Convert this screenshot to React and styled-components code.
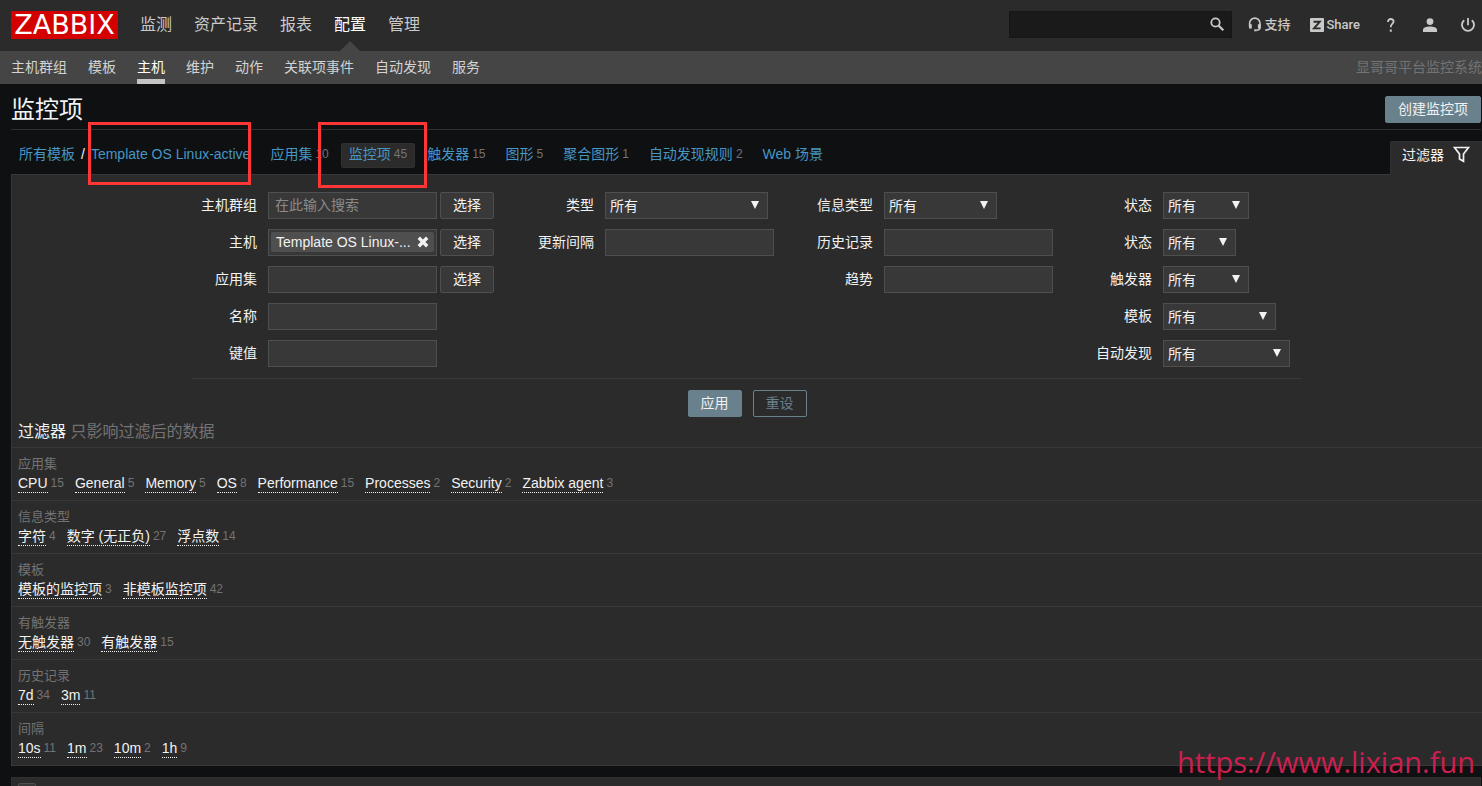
import React from 'react';
import styled, { createGlobalStyle, css } from 'styled-components';

const GlobalStyle = createGlobalStyle`
  * {
    box-sizing: border-box;
  }
  body {
    margin: 0;
    background: #0e1012;
    color: #f2f2f2;
    font-family: "Liberation Sans", "Noto Sans CJK SC", sans-serif;
    font-size: 14px;
    line-height: 20px;
  }
  a {
    text-decoration: none;
  }
  ul {
    list-style: none;
    margin: 0;
    padding: 0;
  }
  button, input, select {
    font: inherit;
    color: inherit;
  }
`;

const Page = styled.div`
  position: relative;
  height: 100vh;
  overflow: hidden;
`;

/* top bar */
const TopBar = styled.header`
  display: flex;
  justify-content: space-between;
  align-items: center;
  height: 51px;
  padding: 0 7px 2px 11px;
  background: #2b2b2b;
`;

const TopLeft = styled.nav`
  display: flex;
  align-items: center;
  gap: 22px;
`;

const Logo = styled.a`
  display: block;
  width: 107px;
  height: 28px;
  background: #d40000;
  color: #fff;
  font-family: "DejaVu Sans", sans-serif;
  font-size: 27px;
  line-height: 28px;
  text-align: center;
`;

const MainMenu = styled.ul`
  display: flex;
  gap: 22px;
`;

const MainLink = styled.a`
  position: relative;
  display: block;
  font-size: 16px;
  line-height: 51px;
  color: ${({ $active }) => ($active ? '#fff' : '#c9c9c9')};
  ${({ $active }) => $active && css`
    &::after {
      content: '';
      position: absolute;
      bottom: -1px;
      left: 50%;
      margin-left: -10px;
      border: 10px solid transparent;
      border-top: 0;
      border-bottom-color: #454545;
    }
  `}
`;

const TopRight = styled.div`
  display: flex;
  align-items: center;
  color: #c9c9c9;
`;

const SearchForm = styled.form`
  display: flex;
  align-items: center;
  width: 223px;
  height: 27px;
  margin-right: 16px;
  background: #1a1a1a;
  border: 1px solid #161616;
`;

const SearchInput = styled.input`
  flex: 1;
  min-width: 0;
  height: 100%;
  padding: 0 6px;
  background: transparent;
  border: 0;
  outline: none;
`;

const IconButton = styled.button`
  display: flex;
  padding: 0 6px;
  background: none;
  border: 0;
  cursor: pointer;
`;

const ToolLink = styled.a`
  display: flex;
  align-items: center;
  gap: 2px;
  margin-right: ${({ $gap }) => $gap || 0}px;
  color: #c9c9c9;
  font-family: Roboto, "Noto Sans CJK SC", sans-serif;
  font-size: 13px;
  font-weight: 500;
`;

/* second level */
const SubBar = styled.nav`
  display: flex;
  justify-content: space-between;
  height: 33px;
  padding-left: 11px;
  background: #454545;
`;

const SubMenu = styled.ul`
  display: flex;
  gap: 21px;
`;

const SubLink = styled.a`
  display: block;
  height: 33px;
  line-height: 32px;
  color: ${({ $active }) => ($active ? '#fff' : '#d3d3d3')};
  border-bottom: ${({ $active }) => ($active ? '5px solid #c4c4c4' : '0')};
`;

const ServerName = styled.span`
  line-height: 32px;
  color: #737373;
  white-space: nowrap;
`;

/* heading */
const Main = styled.main`
  padding-left: 11px;
`;

const TitleRow = styled.div`
  display: flex;
  justify-content: space-between;
  align-items: center;
  height: 46px;
  margin-right: 1px;
  padding-top: 6px;
  border-bottom: 1px solid #303030;
`;

const Title = styled.h1`
  margin: 0;
  font-size: 24px;
  font-weight: 400;
  line-height: 32px;
`;

const Button = styled.button`
  height: 27px;
  padding: 0 12px 2px;
  border: 1px solid ${({ $kind }) => ($kind ? '#69808d' : '#4f4f4f')};
  border-radius: 2px;
  background: ${({ $kind }) =>
    $kind === 'primary' ? '#69808d' : $kind === 'outline' ? 'transparent' : '#383838'};
  color: ${({ $kind }) => ($kind === 'outline' ? '#69808d' : '#f2f2f2')};
  line-height: 22px;
  white-space: nowrap;
  cursor: pointer;
`;

/* template navigation */
const NavRow = styled.div`
  display: flex;
  justify-content: space-between;
  align-items: flex-end;
  height: 44px;
`;

const Crumbs = styled.ul`
  display: flex;
  gap: 4px;
  padding-bottom: 6px;
`;

const Crumb = styled.li`
  position: relative;
  display: flex;
  align-items: center;
  height: 25px;
  padding: 0 7px 4px;
  border: 1px solid ${({ $selected }) => ($selected ? '#303030' : 'transparent')};
  border-radius: 2px;
  background: ${({ $selected }) => ($selected ? '#2b2b2b' : 'transparent')};
  white-space: nowrap;
  a {
    color: #4796c4;
  }
`;

const CrumbPath = styled.div`
  display: flex;
  gap: 6px;
`;

const Count = styled.span`
  margin-left: 3px;
  font-size: 12px;
  color: #737373;
`;

const Highlight = styled.span`
  position: absolute;
  z-index: 2;
  border: 3px solid #ff3636;
  pointer-events: none;
  ${({ $wide }) => ($wide
    ? 'top: -22px; left: -24px; right: -13px; bottom: -21px;'
    : 'top: -22px; left: -3px; right: -1px; bottom: -21px;')}
`;

const Anchor = styled.span`
  position: relative;
`;

const FilterTab = styled.a`
  display: flex;
  align-items: center;
  gap: 9px;
  height: 34px;
  margin-bottom: -1px;
  padding: 0 12px 8px 11px;
  border: 1px solid #303030;
  border-width: 1px 0 0 1px;
  border-radius: 2px 0 0 0;
  background: #2b2b2b;
  color: #f2f2f2;
`;

const Panel = styled.section`
  border: 1px solid #383838;
  border-right: 0;
  background: #2b2b2b;
`;

/* filter form */
const FilterForm = styled.form`
  max-width: 1110px;
  margin: 0 auto;
  padding-top: 17px;
`;

const FilterGrid = styled.div`
  display: grid;
  grid-template-columns: 337fr 279fr 279fr 215fr;
  padding-bottom: 11px;
  border-bottom: 1px solid #383838;
`;

const FilterColumn = styled.div`
  display: flex;
  flex-direction: column;
  gap: 10px;
`;

const Field = styled.div`
  display: grid;
  grid-template-columns: 65px auto;
  column-gap: 11px;
  height: 27px;
`;

const Label = styled.label`
  line-height: 27px;
  text-align: right;
  white-space: nowrap;
`;

const Controls = styled.div`
  display: flex;
  gap: 3px;
`;

const boxed = css`
  height: 27px;
  background: #383838;
  border: 1px solid #4f4f4f;
  border-radius: 0;
  outline: none;
`;

const TextInput = styled.input`
  ${boxed}
  width: 169px;
  padding: 0 6px 2px;
  &::placeholder {
    color: #8a8a8a;
  }
`;

const MultiSelect = styled.div`
  ${boxed}
  display: flex;
  width: 169px;
  padding: 2px;
`;

const Chip = styled.span`
  display: flex;
  align-items: center;
  justify-content: space-between;
  flex: 1;
  height: 20px;
  padding: 0 5px 1px;
  border-radius: 2px;
  background: #4f4f4f;
  line-height: 18px;
`;

const ChipRemove = styled.button`
  display: flex;
  padding: 0;
  border: 0;
  background: none;
  cursor: pointer;
`;

const SelectBox = styled.span`
  position: relative;
  &::after {
    content: '';
    position: absolute;
    top: 9px;
    right: 9px;
    width: 8px;
    height: 8px;
    background: #f2f2f2;
    clip-path: polygon(0 0, 100% 0, 50% 100%);
    pointer-events: none;
  }
`;

const Select = styled.select`
  ${boxed}
  appearance: none;
  width: ${({ $width }) => $width}px;
  padding: 0 20px 0 4px;
`;

const FilterActions = styled.div`
  display: flex;
  justify-content: center;
  gap: 11px;
  padding: 11px 0 4px;
`;

/* subfilter */
const SubfilterTitle = styled.h4`
  margin: 0;
  padding: 0 6px 4px;
  font-size: 16px;
  font-weight: 400;
  line-height: 22px;
  span {
    color: #737373;
  }
`;

const Subfilter = styled.div`
  height: 53px;
  padding: 6px 6px 0;
  border-top: 1px solid #383838;
`;

const SubfilterName = styled.h3`
  margin: 0;
  font-size: 13px;
  font-weight: 400;
  line-height: 20px;
  color: #737373;
`;

const SubfilterOptions = styled.ul`
  display: flex;
  gap: 11px;
`;

const Option = styled.li`
  display: flex;
  line-height: 18px;
  a {
    height: 19px;
    color: #f2f2f2;
    border-bottom: 1px dotted #f2f2f2;
  }
`;

const ItemsTable = styled.table`
  width: calc(100% - 1px);
  margin-top: 11px;
  border: 1px solid #303030;
  border-collapse: collapse;
  background: #2b2b2b;
  th {
    padding: 5px 6px;
    text-align: left;
  }
`;

const CheckBox = styled.input`
  appearance: none;
  display: block;
  width: 18px;
  height: 18px;
  margin: 0;
  background: #383838;
  border: 1px solid #4f4f4f;
  border-radius: 2px;
`;

const SiteMark = styled.span`
  position: absolute;
  right: 7px;
  bottom: 6px;
  z-index: 3;
  font-family: "Open Sans", sans-serif;
  font-size: 29px;
  line-height: 36px;
  color: #cc1f50;
  pointer-events: none;
`;

const SearchIcon = () => (
  <svg width="15" height="15" viewBox="0 0 15 15" fill="none" stroke="#c9c9c9">
    <circle cx="5.5" cy="5.5" r="4.2" strokeWidth="1.8" />
    <path d="M8.7 8.7 13.3 13.3" strokeWidth="2.2" />
  </svg>
);

const SupportIcon = () => (
  <svg width="14" height="15" viewBox="0 0 14 15" fill="none" stroke="#c9c9c9" strokeWidth="1.6">
    <path d="M1.6 9.5V6.3a5.2 5.2 0 0 1 10.4 0V10c0 2.2-1.4 3.3-3.6 3.3" />
    <path d="M2.4 7.2v4.2M11.3 7.2v4.2" strokeWidth="2.8" />
    <path d="M6.2 13.3h2.4" strokeWidth="2" />
  </svg>
);

const ShareIcon = () => (
  <svg width="14" height="14" viewBox="0 0 14 14">
    <rect width="14" height="14" rx="1" fill="#c9c9c9" />
    <path d="M3.5 3.8h6.3L4 10.4h6.6" fill="none" stroke="#2b2b2b" strokeWidth="1.9" />
  </svg>
);

const HelpIcon = () => (
  <svg width="8" height="14" viewBox="0 0 8 14" fill="none" stroke="#c9c9c9" strokeWidth="1.8">
    <path d="M1 4V3.6C1 1.9 2.2 1 3.8 1s2.8.9 2.8 2.5c0 2.3-2.8 2.6-2.8 5.2v.6" />
    <path d="M2.8 12.6h2" strokeWidth="2.2" />
  </svg>
);

const UserIcon = () => (
  <svg width="14" height="14" viewBox="0 0 14 14" fill="#c9c9c9">
    <circle cx="7" cy="3.6" r="3.4" />
    <path d="M0 14v-2.2C0 9.8 3.6 8.6 7 8.6s7 1.2 7 3.2V14z" />
  </svg>
);

const PowerIcon = () => (
  <svg width="14" height="14" viewBox="0 0 14 14" fill="none" stroke="#c9c9c9" strokeWidth="1.8">
    <path d="M7 0v7.2" />
    <path d="M3.2 2.2a6 6 0 1 0 7.6 0" />
  </svg>
);

const FunnelIcon = () => (
  <svg width="17" height="17" viewBox="0 0 17 17" fill="none" stroke="#f2f2f2" strokeWidth="1.7">
    <path d="M1.5 1.5h14L10.5 8v7.3L6.5 13V8z" />
  </svg>
);

const CrossIcon = () => (
  <svg width="12" height="12" viewBox="0 0 12 12" stroke="#f2f2f2" strokeWidth="3.4">
    <path d="M1.8 1.8 10.2 10.2M10.2 1.8 1.8 10.2" />
  </svg>
);

const mainMenu = ['监测', '资产记录', '报表', '配置', '管理'];
const subMenu = ['主机群组', '模板', '主机', '维护', '动作', '关联项事件', '自动发现', '服务'];

const sections = [
  { name: '应用集', count: 10 },
  { name: '监控项', count: 45, selected: true },
  { name: '触发器', count: 15 },
  { name: '图形', count: 5 },
  { name: '聚合图形', count: 1 },
  { name: '自动发现规则', count: 2 },
  { name: 'Web 场景' },
];

const filterColumns = [
  [
    { id: 'groups', label: '主机群组', placeholder: '在此输入搜索', pick: true },
    { id: 'hosts', label: '主机', chip: 'Template OS Linux-...', pick: true },
    { id: 'application', label: '应用集', pick: true },
    { id: 'name', label: '名称' },
    { id: 'key', label: '键值' },
  ],
  [
    { id: 'type', label: '类型', select: 163 },
    { id: 'delay', label: '更新间隔' },
  ],
  [
    { id: 'value_type', label: '信息类型', select: 113 },
    { id: 'history', label: '历史记录' },
    { id: 'trends', label: '趋势' },
  ],
  [
    { id: 'state', label: '状态', select: 86 },
    { id: 'status', label: '状态', select: 73 },
    { id: 'triggers', label: '触发器', select: 86 },
    { id: 'templated', label: '模板', select: 113 },
    { id: 'discovery', label: '自动发现', select: 127 },
  ],
];

const subfilters = [
  {
    name: '应用集',
    options: [['CPU', 15], ['General', 5], ['Memory', 5], ['OS', 8], ['Performance', 15],
      ['Processes', 2], ['Security', 2], ['Zabbix agent', 3]],
  },
  { name: '信息类型', options: [['字符', 4], ['数字 (无正负)', 27], ['浮点数', 14]] },
  { name: '模板', options: [['模板的监控项', 3], ['非模板监控项', 42]] },
  { name: '有触发器', options: [['无触发器', 30], ['有触发器', 15]] },
  { name: '历史记录', options: [['7d', 34], ['3m', 11]] },
  { name: '间隔', options: [['10s', 11], ['1m', 23], ['10m', 2], ['1h', 9]] },
];

const FilterField = ({ field }) => {
  let control = <TextInput id={field.id} type="text" placeholder={field.placeholder} />;

  if (field.select) {
    control = (
      <SelectBox>
        <Select id={field.id} $width={field.select}>
          <option>所有</option>
        </Select>
      </SelectBox>
    );
  } else if (field.chip) {
    control = (
      <MultiSelect>
        <Chip>
          {field.chip}
          <ChipRemove id={field.id} type="button">
            <CrossIcon />
          </ChipRemove>
        </Chip>
      </MultiSelect>
    );
  }

  return (
    <Field>
      <Label htmlFor={field.id}>{field.label}</Label>
      <Controls>
        {control}
        {field.pick && <Button type="button">选择</Button>}
      </Controls>
    </Field>
  );
};

const Header = () => (
  <>
    <TopBar>
      <TopLeft>
        <Logo href="#">ZABBIX</Logo>
        <MainMenu>
          {mainMenu.map((item) => (
            <li key={item}>
              <MainLink href="#" $active={item === '配置'}>{item}</MainLink>
            </li>
          ))}
        </MainMenu>
      </TopLeft>
      <TopRight>
        <SearchForm>
          <SearchInput type="text" aria-label="搜索" />
          <IconButton type="button" aria-label="搜索"><SearchIcon /></IconButton>
        </SearchForm>
        <ToolLink href="#" $gap={20}><SupportIcon />支持</ToolLink>
        <ToolLink href="#" $gap={27}><ShareIcon />Share</ToolLink>
        <ToolLink href="#" $gap={28} aria-label="帮助"><HelpIcon /></ToolLink>
        <ToolLink href="#" $gap={24} aria-label="用户"><UserIcon /></ToolLink>
        <ToolLink href="#" aria-label="退出"><PowerIcon /></ToolLink>
      </TopRight>
    </TopBar>
    <SubBar>
      <SubMenu>
        {subMenu.map((item) => (
          <li key={item}>
            <SubLink href="#" $active={item === '主机'}>{item}</SubLink>
          </li>
        ))}
      </SubMenu>
      <ServerName>显哥哥平台监控系统</ServerName>
    </SubBar>
  </>
);

const App = () => (
  <>
    <GlobalStyle />
    <Page>
      <Header />
      <Main>
        <TitleRow>
          <Title>监控项</Title>
          <Button type="button" $kind="primary">创建监控项</Button>
        </TitleRow>

        <NavRow>
          <Crumbs>
            <Crumb>
              <CrumbPath>
                <a href="#">所有模板</a>
                <span>/</span>
                <Anchor>
                  <a href="#">Template OS Linux-active</a>
                  <Highlight />
                </Anchor>
              </CrumbPath>
            </Crumb>
            {sections.map((section) => (
              <Crumb key={section.name} $selected={section.selected}>
                <a href="#">{section.name}</a>
                {section.count && <Count>{section.count}</Count>}
                {section.selected && <Highlight $wide />}
              </Crumb>
            ))}
          </Crumbs>
          <FilterTab href="#">过滤器<FunnelIcon /></FilterTab>
        </NavRow>

        <Panel>
          <FilterForm>
            <FilterGrid>
              {filterColumns.map((column, i) => (
                <FilterColumn key={i}>
                  {column.map((field) => <FilterField key={field.id} field={field} />)}
                </FilterColumn>
              ))}
            </FilterGrid>
            <FilterActions>
              <Button type="button" $kind="primary">应用</Button>
              <Button type="button" $kind="outline">重设</Button>
            </FilterActions>
          </FilterForm>

          <SubfilterTitle>过滤器 <span>只影响过滤后的数据</span></SubfilterTitle>
          {subfilters.map((group) => (
            <Subfilter key={group.name}>
              <SubfilterName>{group.name}</SubfilterName>
              <SubfilterOptions>
                {group.options.map(([name, count]) => (
                  <Option key={name}>
                    <a href="#">{name}</a>
                    <Count>{count}</Count>
                  </Option>
                ))}
              </SubfilterOptions>
            </Subfilter>
          ))}
        </Panel>

        <ItemsTable>
          <thead>
            <tr>
              <th><CheckBox type="checkbox" aria-label="全选" /></th>
            </tr>
          </thead>
        </ItemsTable>
      </Main>
      <SiteMark>https://www.lixian.fun</SiteMark>
    </Page>
  </>
);

export default App;
